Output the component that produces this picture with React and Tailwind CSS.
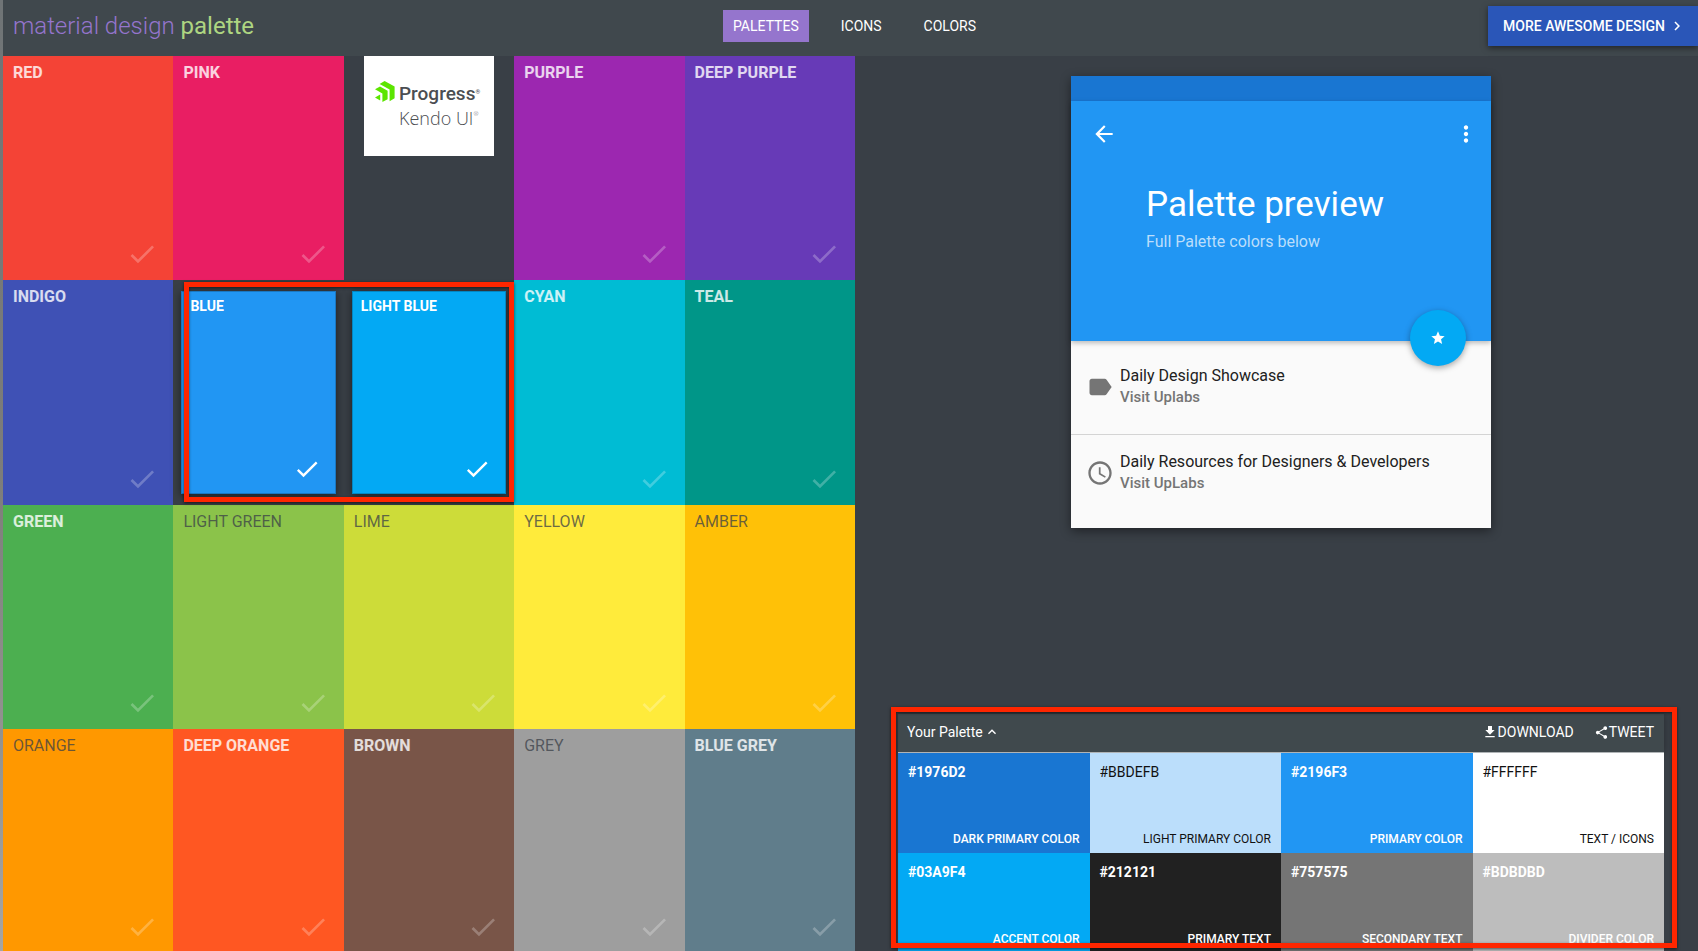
import { useState } from "react";
import {
  MdAccessTime,
  MdArrowBack,
  MdCheck,
  MdChevronRight,
  MdFileDownload,
  MdKeyboardArrowUp,
  MdLabel,
  MdMoreVert,
  MdShare,
  MdStar,
} from "react-icons/md";

const light = "font-bold text-white/80";
const dark = "font-normal text-[#3a4048]/75";

const tiles = [
  { name: "Red", bg: "bg-[#f44336]", text: light },
  { name: "Pink", bg: "bg-[#e91e63]", text: light },
  { ad: true, name: "ad" },
  { name: "Purple", bg: "bg-[#9c27b0]", text: light },
  { name: "Deep Purple", bg: "bg-[#673ab7]", text: light },
  { name: "Indigo", bg: "bg-[#3f51b5]", text: light },
  { name: "Blue", bg: "bg-[#2196f3]", text: light },
  { name: "Light Blue", bg: "bg-[#03a9f4]", text: light },
  { name: "Cyan", bg: "bg-[#00bcd4]", text: light },
  { name: "Teal", bg: "bg-[#009688]", text: light },
  { name: "Green", bg: "bg-[#4caf50]", text: light },
  { name: "Light Green", bg: "bg-[#8bc34a]", text: dark },
  { name: "Lime", bg: "bg-[#cddc39]", text: dark },
  { name: "Yellow", bg: "bg-[#ffeb3b]", text: dark },
  { name: "Amber", bg: "bg-[#ffc107]", text: dark },
  { name: "Orange", bg: "bg-[#ff9800]", text: dark },
  { name: "Deep Orange", bg: "bg-[#ff5722]", text: light },
  { name: "Brown", bg: "bg-[#795548]", text: light },
  { name: "Grey", bg: "bg-[#9e9e9e]", text: dark },
  { name: "Blue Grey", bg: "bg-[#607d8b]", text: light },
];

const onDark = { hexCls: "font-bold", labelCls: "font-medium" };
const onLight = { hexCls: "font-normal", labelCls: "font-normal" };

const swatches = [
  { hex: "#1976D2", label: "Dark primary color", cls: "bg-[#1976d2] text-white", ...onDark },
  { hex: "#BBDEFB", label: "Light primary color", cls: "bg-[#bbdefb] text-[#111]", ...onLight },
  { hex: "#2196F3", label: "Primary color", cls: "bg-[#2196f3] text-white", ...onDark },
  { hex: "#FFFFFF", label: "Text / Icons", cls: "bg-white text-[#111]", ...onLight },
  { hex: "#03A9F4", label: "Accent color", cls: "bg-[#03a9f4] text-white", ...onDark },
  { hex: "#212121", label: "Primary text", cls: "bg-[#212121] text-white", ...onDark },
  { hex: "#757575", label: "Secondary text", cls: "bg-[#757575] text-white", ...onDark },
  { hex: "#BDBDBD", label: "Divider color", cls: "bg-[#bdbdbd] text-white", ...onDark },
];

const frame =
  "pointer-events-none absolute z-20 border-5 border-[#ff2600] shadow-[0_1px_3px_rgba(0,0,0,0.6),inset_0_1px_3px_rgba(0,0,0,0.5)]";

function KendoAd() {
  return (
    <div className="flex justify-center">
      <a href="#kendo" className="flex h-[100px] w-[130px] gap-1 self-start bg-white pt-[25px] pl-[11px]">
        <svg viewBox="0 0 20 21" className="h-[21px] w-5 shrink-0 fill-[#5ce500]" aria-hidden="true">
          <path d="M4.6 2.9 9.6 0 19.6 5.6V17.3L14.6 20.2V8.5Z" />
          <path d="M0 8.3 5 5.4 12.6 9.7V18.2L7.4 21V12.4Z" />
          <path d="M0 16.6 5.2 13.6V19.6Z" />
        </svg>
        <span className="text-[#4b4e52]">
          <span className="flex text-[19px] leading-[26px] font-medium">
            Progress<sup className="top-2 text-[6px] leading-none">®</sup>
          </span>
          <span className="flex font-['Open_Sans',sans-serif] text-lg leading-[22px] font-light">
            Kendo UI<sup className="top-1 text-[6px] leading-none">®</sup>
          </span>
        </span>
      </a>
    </div>
  );
}

function Tile({ tile, selected, onPick }) {
  return (
    <button
      type="button"
      aria-pressed={selected}
      onClick={onPick}
      className={
        "flex flex-col justify-between text-left uppercase " +
        tile.bg +
        (selected
          ? " mx-2 my-[11px] border border-black/20 bg-clip-border px-2 pt-0.5 pb-[10px] text-sm leading-6 font-bold text-white shadow-[0_2px_8px_rgba(0,0,0,0.5)]"
          : " px-[10px] pt-[5px] pb-[10px] text-base leading-6 " + tile.text)
      }
    >
      <span>{tile.name}</span>
      <MdCheck
        className={selected ? "mr-1.5 size-7 self-end text-white" : "mr-[5px] size-8 self-end text-white/25"}
      />
    </button>
  );
}

function Preview() {
  return (
    <section className="w-[420px] self-center bg-[#fafafa] shadow-[0_3px_10px_rgba(0,0,0,0.45)]">
      <div className="h-[25px] bg-[#1976d2]" />
      <div className="relative flex h-[240px] flex-col bg-[#2196f3] text-white shadow-[0_2px_5px_rgba(0,0,0,0.26)]">
        <div className="flex justify-between px-5 pt-5">
          <button type="button" aria-label="Back">
            <MdArrowBack className="size-[26px]" />
          </button>
          <button type="button" aria-label="More" className="-mr-2">
            <MdMoreVert className="size-[26px]" />
          </button>
        </div>
        <div className="px-[75px] pt-9">
          <h2 className="text-[35px] leading-11 font-normal">Palette preview</h2>
          <p className="text-base leading-[30px] text-[#bbdefb]">Full Palette colors below</p>
        </div>
        <button
          type="button"
          aria-label="Favorite"
          className="absolute right-[25px] -bottom-[25px] flex size-14 items-center justify-center rounded-full bg-[#03a9f4] shadow-[0_2px_6px_rgba(0,0,0,0.35)]"
        >
          <MdStar className="size-4" />
        </button>
      </div>
      <ul className="pt-2 pb-[7px] text-base">
        <li className="flex h-[86px] gap-1 border-b border-[#d4d4d4] pt-4 pl-[15px]">
          <MdLabel className="mt-2 size-7 text-[#757575]" />
          <div className="pl-0.5">
            <p className="leading-[22px] text-[#212121]">Daily Design Showcase</p>
            <a href="#uplabs" className="block text-[15px] leading-5 font-medium text-[#757575]">Visit Uplabs</a>
          </div>
        </li>
        <li className="flex h-[86px] gap-1 pt-4 pl-[15px]">
          <MdAccessTime className="mt-2 size-7 text-[#757575]" />
          <div className="pl-0.5">
            <p className="leading-[22px] text-[#212121]">Daily Resources for Designers &amp; Developers</p>
            <a href="#resources" className="block text-[15px] leading-5 font-medium text-[#757575]">Visit UpLabs</a>
          </div>
        </li>
      </ul>
    </section>
  );
}

function YourPalette() {
  return (
    <section className="relative mt-auto">
      <div className="flex h-[39px] items-center border-b border-[#b0b4b6] bg-[#40494d] pr-[10px] pb-0.5 pl-[9px] text-sm text-white shadow-[0_0_8px_rgba(0,0,0,0.3)]">
        <button type="button" className="flex items-center gap-px">
          Your Palette <MdKeyboardArrowUp className="size-4" />
        </button>
        <button type="button" className="ml-auto flex items-center uppercase">
          <MdFileDownload className="size-4" />
          Download
        </button>
        <button type="button" className="ml-5 flex items-center uppercase">
          <MdShare className="size-[15px]" />
          Tweet
        </button>
      </div>
      <ul className="grid grid-cols-4">
        {swatches.map((s) => (
          <li key={s.hex} className={"flex h-[100px] flex-col justify-between px-[10px] pt-[9px] pb-1 " + s.cls}>
            <span className={"text-sm leading-5 " + s.hexCls}>{s.hex}</span>
            <span className={"text-right text-xs leading-5 uppercase " + s.labelCls}>{s.label}</span>
          </li>
        ))}
      </ul>
      <div className={frame + " -top-[7px] -right-[13px] bottom-[5px] -left-[7px]"} />
    </section>
  );
}

export default function App() {
  const [picked, setPicked] = useState(["Blue", "Light Blue"]);
  const pick = (name) => setPicked((p) => [...p.slice(-1), name]);

  return (
    <div className="flex h-screen overflow-hidden bg-[#393f46] font-[Roboto,sans-serif] text-white">
      <div className="w-[3px] shrink-0 bg-linear-to-b from-[#6f7476] via-[#7d7d7a] to-[#a5a5a3]" />
      <div className="flex min-w-0 flex-1 flex-col">
        <header className="grid h-14 shrink-0 grid-cols-[1fr_auto_1fr] items-start bg-[#40484d]">
          <h1 className="pl-[10px] text-2xl leading-[52px] font-light text-[#9575cd]">
            material design <span className="font-normal text-[#aed581]">palette</span>
          </h1>
          <nav className="mt-[10px] ml-2 flex gap-[22px] text-sm leading-8">
            <a href="#palettes" className="bg-[#9575cd] px-[10px]">PALETTES</a>
            <a href="#icons" className="px-[10px]">ICONS</a>
            <a href="#colors" className="px-[10px]">COLORS</a>
          </nav>
          <a
            href="#more"
            className="mt-[6px] flex h-10 items-center gap-[3px] justify-self-end bg-[#2a56b8] pr-3 pl-[15px] text-sm font-medium shadow-[0_2px_6px_rgba(0,0,0,0.5)]"
          >
            MORE AWESOME DESIGN <MdChevronRight className="size-[18px]" />
          </a>
        </header>
        <main className="grid h-[calc(100vh-54px)] shrink-0 grid-cols-[852fr_843fr]">
          <div className="relative grid grid-cols-5 grid-rows-4">
            {tiles.map((t) =>
              t.ad ? (
                <KendoAd key={t.name} />
              ) : (
                <Tile key={t.name} tile={t} selected={picked.includes(t.name)} onPick={() => pick(t.name)} />
              )
            )}
            <div className={frame + " top-0.5 right-0 bottom-[3px] left-[11px] col-start-2 col-end-4 row-start-2 row-end-3"} />
          </div>
          <div className="flex flex-col pt-5 pr-[34px] pl-[43px]">
            <Preview />
            <YourPalette />
          </div>
        </main>
      </div>
    </div>
  );
}
